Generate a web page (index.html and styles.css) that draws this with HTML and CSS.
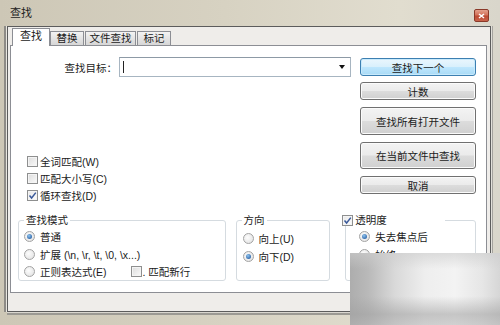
FILE: index.html
```html
<!DOCTYPE html>
<html lang="zh">
<head>
<meta charset="utf-8">
<title>查找</title>
<link rel="stylesheet" href="styles.css">
</head>
<body>
<div class="window">
  <div class="titlebar">
    <span class="title">查找</span>
    <span class="close"><svg width="7" height="6" viewBox="0 0 7 6"><path d="M1 1 L6 5 M6 1 L1 5" stroke="#fff" stroke-width="1.5"/></svg></span>
  </div>
  <div class="client">
    <div class="tabs">
      <div class="tab active">查找</div>
      <div class="tab w34">替换</div>
      <div class="tab w51">文件查找</div>
      <div class="tab w34">标记</div>
    </div>
    <div class="page">
      <div class="top">
        <div class="left">
          <div class="search-row">
            <span class="search-label">查找目标：</span>
            <div class="combo"><span class="caret"></span><span class="arrow"></span></div>
          </div>
          <div class="checks">
            <div class="opt"><span class="cb"></span>全词匹配(W)</div>
            <div class="opt"><span class="cb"></span>匹配大小写(C)</div>
            <div class="opt"><span class="cb checked"><svg width="9" height="9" viewBox="0 0 9 9"><path d="M1.5 4.5 L3.6 7 L7.8 1.6" fill="none" stroke="#3b5a9a" stroke-width="1.5"/></svg></span>循环查找(D)</div>
          </div>
        </div>
        <div class="buttons">
          <div class="btn default h18">查找下一个</div>
          <div class="btn h18 g6">计数</div>
          <div class="btn h28 g7">查找所有打开文件</div>
          <div class="btn h27 g7">在当前文件中查找</div>
          <div class="btn h18 g7">取消</div>
        </div>
      </div>
      <div class="groups">
        <fieldset class="group mode">
          <legend>查找模式</legend>
          <div class="row first"><span class="radio checked"></span>普通</div>
          <div class="row"><span class="radio"></span>扩展 (\n, \r, \t, \0, \x...)</div>
          <div class="row"><span class="radio"></span>正则表达式(E)<span class="newline"><span class="cb"></span>. 匹配新行</span></div>
        </fieldset>
        <fieldset class="group dir">
          <legend>方向</legend>
          <div class="row first2"><span class="radio"></span>向上(U)</div>
          <div class="row"><span class="radio checked"></span>向下(D)</div>
        </fieldset>
        <fieldset class="group trans">
          <legend><span class="cb checked"><svg width="9" height="9" viewBox="0 0 9 9"><path d="M1.5 4.5 L3.6 7 L7.8 1.6" fill="none" stroke="#3b5a9a" stroke-width="1.5"/></svg></span>透明度</legend>
          <div class="row first"><span class="radio checked"></span>失去焦点后</div>
          <div class="row"><span class="radio"></span>始终</div>
        </fieldset>
      </div>
    </div>
  </div>
  <div class="watermark"></div>
</div>
</body>
</html>
```

FILE: styles.css
```css
* { box-sizing: border-box; }
body {
  margin: 0;
  width: 500px;
  height: 325px;
  overflow: hidden;
  font-family: "Liberation Sans", "Noto Sans CJK SC", sans-serif;
  font-size: 10.5px;
  color: #1b1b1b;
}
.window {
  position: relative;
  width: 500px;
  height: 325px;
  background: linear-gradient(90deg, #cdc7b6 0%, #d7d2c2 45%, #e1ddcf 80%, #d9d6cb 100%);
  overflow: hidden;
}
.titlebar {
  height: 26px;
  display: flex;
  align-items: center;
  justify-content: space-between;
  padding: 0 11px 0 10px;
}
.title { font-size: 11px; line-height: 12px; color: #1e1e1e; }
.close {
  width: 15px;
  height: 13px;
  margin-top: 5px;
  border: 1px solid #8a3a2a;
  border-radius: 2px;
  background: linear-gradient(#e3a08c 0%, #d4735c 45%, #bd4a33 55%, #c9634b 100%);
  display: flex;
  align-items: center;
  justify-content: center;
}
.client {
  margin: 0 9px 0 7px;
  height: 286px;
  border: 1px solid #5c5c5c;
  background: #efedea;
  padding: 1px 3px 0 2px;
  box-shadow: -1px 0 0 #e8e6e0, -3px 0 0 #8d8b86, 1px 0 0 #e2e0da, 2px 0 0 #a5a39e, 0 1px 0 #d9d6cf, 0 3px 0 #9b9993;
}
.tabs {
  height: 17px;
  display: flex;
  align-items: flex-end;
  padding-left: 2px;
  position: relative;
  z-index: 1;
}
.tab {
  height: 14px;
  border: 1px solid #8c8e94;
  border-bottom: none;
  background: linear-gradient(#f3f3f3, #e4e4e4 50%, #d6d6d6);
  text-align: center;
  line-height: 12px;
  color: #1b1b1b;
}
.tab.active {
  width: 38px;
  height: 18px;
  margin-bottom: -1px;
  background: #fff;
  line-height: 15px;
  font-size: 11px;
}
.w34 { width: 34px; }
.w51 { width: 51px; margin-left: 1px; }
.w34:last-child { margin-left: 1px; }
.page {
  width: 477px;
  height: 248px;
  border: 1px solid #8c8e94;
  background: #fff;
  padding: 11px 10px 0 7px;
}
.top {
  display: flex;
  justify-content: space-between;
  height: 147px;
}
.search-row {
  display: flex;
  align-items: center;
  height: 20px;
}
.search-label {
  width: 99px;
  margin-right: 2px;
  text-align: right;
}
.combo {
  position: relative;
  width: 232px;
  height: 20px;
  border: 1px solid #a7b5c1;
  border-top-color: #8d9aa6;
  background: #fff;
}
.caret {
  position: absolute;
  left: 3px;
  top: 3px;
  width: 1px;
  height: 12px;
  background: #222;
}
.arrow {
  position: absolute;
  right: 5px;
  top: 7px;
  width: 0;
  height: 0;
  border-left: 3.5px solid transparent;
  border-right: 3.5px solid transparent;
  border-top: 4px solid #111;
}
.checks { margin-top: 76px; padding-left: 9px; }
.opt {
  display: flex;
  align-items: center;
  height: 17px;
}
.cb {
  width: 11px;
  height: 11px;
  border: 1px solid #8e8f8f;
  background: linear-gradient(135deg, #dcdcdc, #fafafa);
  box-shadow: inset 0 0 0 1px #f4f4f4;
  margin-right: 2px;
  display: inline-flex;
  align-items: center;
  justify-content: center;
  flex: none;
}
.cb.checked { background: linear-gradient(135deg, #e8e8e8, #fdfdfd); }
.buttons { width: 116px; padding-top: 1px; }
.btn {
  display: flex;
  align-items: center;
  justify-content: center;
  border: 1px solid #707070;
  border-radius: 3px;
  background: linear-gradient(#f3f3f3 0%, #ebebeb 48%, #dcdcdc 52%, #d0d0d0 100%);
  box-shadow: inset 0 0 0 1px #fbfbfb;
  color: #1b1b1b;
}
.btn.default {
  border-color: #3c7fb1;
  background: linear-gradient(#eaf6fd 0%, #d9f0fc 48%, #bee6fd 52%, #a9dbf6 100%);
  box-shadow: inset 0 0 0 1px #c8eafc;
}
.h18 { height: 18px; }
.h27 { height: 27px; }
.h28 { height: 28px; }
.g6 { margin-top: 6px; }
.g7 { margin-top: 7px; }
.groups {
  display: flex;
  margin-top: 10px;
}
.group {
  margin: 0;
  padding: 0;
  height: 67px;
  border: 1px solid #d5dbe0;
  border-radius: 3px;
  min-width: 0;
}
.group legend {
  padding: 0 2px;
  margin-left: 5px;
  line-height: 12px;
  height: 12px;
}
.mode { width: 208px; }
.dir { width: 95px; margin-left: 10px; }
.trans { width: 131px; margin-left: 15px; }
.trans legend {
  margin-left: -4px;
  width: 103px;
  padding: 0;
  display: flex;
  align-items: center;
  background: #fff;
}
.row {
  display: flex;
  align-items: center;
  height: 17.5px;
  padding-left: 5px;
}
.row.first { margin-top: 2px; }
.row.first2 { margin-top: 4px; }
.dir .row { padding-left: 6px; }
.trans .row { padding-left: 13px; }
.radio {
  width: 11px;
  height: 11px;
  border-radius: 50%;
  border: 1px solid #a3a3a3;
  background: radial-gradient(circle at 40% 40%, #fdfdfd, #dedede);
  margin-right: 5px;
  flex: none;
  position: relative;
}
.radio.checked::after {
  content: "";
  position: absolute;
  left: 2px;
  top: 2px;
  width: 5px;
  height: 5px;
  border-radius: 50%;
  background: radial-gradient(circle at 40% 35%, #8fc3ee, #2a62a6 80%);
}
.newline {
  display: inline-flex;
  align-items: center;
  margin-left: 24px;
}
.newline .cb { margin-right: 1px; }
.watermark {
  position: absolute;
  left: 350px;
  top: 253px;
  width: 150px;
  height: 72px;
  background:
    linear-gradient(180deg, rgba(205,205,205,0.6) 0%, rgba(240,240,240,0) 22%, rgba(255,255,255,0) 60%, rgba(160,160,160,0.55) 85%, rgba(175,175,175,0.5) 100%),
    linear-gradient(90deg, #adadad 0%, #b9b9b9 12%, #d9d9d9 30%, #eeeeee 50%, #f3f3f3 70%, #e6e6e6 88%, #d6d6d6 100%);
}
```
